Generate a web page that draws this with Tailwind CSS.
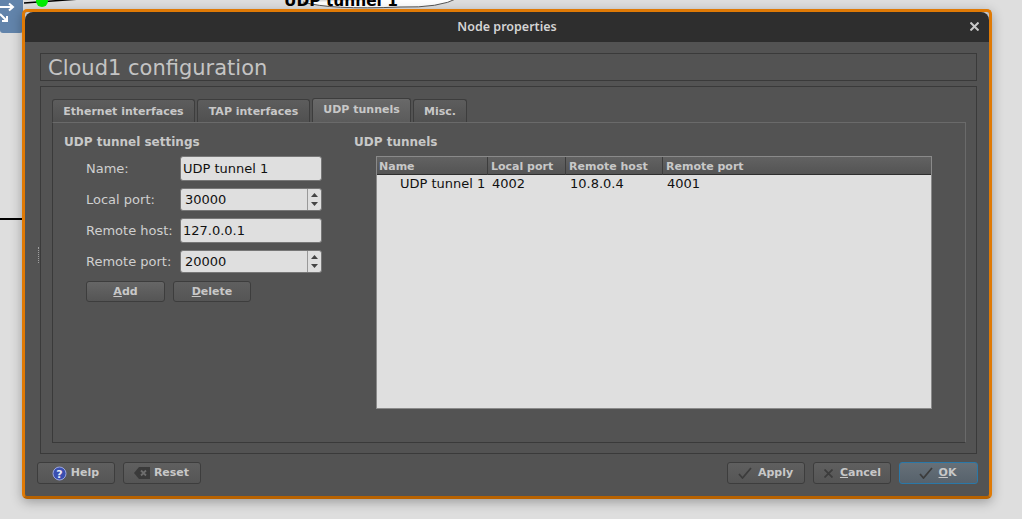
<!DOCTYPE html>
<html lang="en">
  <head>
    <meta charset="UTF-8" />
    <title>Node properties</title>
    <script src="https://cdn.jsdelivr.net/npm/@tailwindcss/browser@4"></script>
  </head>
  <body class="relative w-[1022px] h-[519px] overflow-hidden bg-[#dedede] font-['DejaVu_Sans',sans-serif] text-[13px] text-[#cfcfcf]">
    <!-- Canvas behind the dialog -->
    <div class="absolute left-0 top-[-8px] w-[23px] h-[41px] rounded-b-[3px] bg-[#6284ab]">
      <svg class="absolute left-0 top-[8px]" width="16" height="26" viewBox="0 0 16 26" fill="none" stroke="#fff" stroke-width="2">
        <path d="M0 7h12M9 3.500l4 3.500-4 3.500" />
        <path d="M0 14l7 7M2 21h5v-5" />
      </svg>
    </div>
    <svg class="absolute left-0 top-0" width="480" height="10" viewBox="0 0 480 10" fill="none">
      <path d="M24 3L80 -1" stroke="#000" stroke-width="1.500" />
      <circle cx="42" cy="1" r="6" fill="#00f000" />
      <path d="M303 2Q330 10 400 7Q440 8 458 -2" stroke="#555" stroke-width="1" fill="#fff" />
    </svg>
    <span class="absolute left-[284px] top-[-8px] font-bold text-[15.400px] leading-[18px] text-black">UDP tunnel 1</span>
    <div class="absolute left-0 top-[218px] w-[24px] h-[2px] bg-black"></div>

    <!-- Dialog -->
    <div class="absolute left-[22px] top-[9px] w-[970px] h-[490px] rounded-[5px] border-[3px] border-[#e07a05] border-b-[#b86200] bg-[#535353] shadow-[0_3px_12px_rgba(0,0,0,0.3)] flex flex-col">
      <div class="h-[30px] shrink-0 rounded-t-[2px] bg-[#c4c4c4]">
        <div class="relative h-full rounded-t-[8px] bg-[#2e2e2e] flex items-center justify-center font-['Noto_Sans',sans-serif] font-semibold text-[12.500px] text-[#d4d4d4]">
          Node properties
          <svg class="absolute right-[10px] top-[10px]" width="9" height="9" viewBox="0 0 9 9" stroke="#c8c8c8" stroke-width="2"><path d="M.5.500l8 8M8.500.500l-8 8" /></svg>
        </div>
      </div>

      <div class="relative flex-1 flex flex-col pt-[11px] px-[15px]">
        <!-- Splitter grip -->
        <div class="absolute left-[13px] top-[205px] w-[2px] h-[16px] border-l border-dotted border-[#a0a0a0]"></div>

        <div class="h-[28px] w-[937px] border border-[#3a3a3a] pl-[7px] pt-[4px] flex items-center text-[21px] text-[#c4c4c4]">Cloud1 configuration</div>

        <div class="mt-[5px] w-[937px] h-[368px] border border-[#3a3a3a] pt-[11px] pl-[11px] pr-[10px] pb-[10px] flex flex-col">
          <!-- Tabs -->
          <div class="flex items-end h-[24px] shrink-0 gap-[2px] text-[11px] font-bold text-[#c8c8c8]">
            <div class="w-[143px] h-[23px] pt-[2px] rounded-t-[3px] border border-b-0 border-[#3d3d3d] bg-gradient-to-b from-[#5d5d5d] to-[#505050] flex items-center justify-center">Ethernet interfaces</div>
            <div class="w-[113px] h-[23px] pt-[2px] rounded-t-[3px] border border-b-0 border-[#3d3d3d] bg-gradient-to-b from-[#5d5d5d] to-[#505050] flex items-center justify-center">TAP interfaces</div>
            <div class="w-[99px] h-[24px] rounded-t-[3px] border border-b-0 border-[#3d3d3d] bg-gradient-to-b from-[#696969] to-[#5b5b5b] flex items-center justify-center pb-[1px]">UDP tunnels</div>
            <div class="w-[54px] h-[23px] pt-[2px] rounded-t-[3px] border border-b-0 border-[#3d3d3d] bg-gradient-to-b from-[#5d5d5d] to-[#505050] flex items-center justify-center">Misc.</div>
          </div>

          <!-- Tab pane -->
          <div class="flex-1 border border-[#6a6a6a] border-l-[#3a3a3a] border-b-[#3a3a3a] flex">
            <!-- Settings form -->
            <div class="w-[301px] shrink-0 pl-[11px] pt-[12px]">
              <div class="h-[15px] leading-[15px] text-[12px] font-bold text-[#c8c8c8]">UDP tunnel settings</div>
              <div class="mt-[6px] ml-[22px] grid grid-cols-[94px_142px] items-center gap-y-[7px]">
                <label>Name:</label>
                <div class="h-[25px] rounded-[3px] border border-[#777] bg-[#dfdfdf] pl-[2px] flex items-center text-[#111]">UDP tunnel 1</div>
                <label>Local port:</label>
                <div class="h-[23px] rounded-[3px] border border-[#777] bg-[#dfdfdf] flex items-center text-[#111]">
                  <span class="flex-1 pl-[4px]">30000</span>
                  <svg class="w-[14px] h-[21px] border-l border-[#999]" viewBox="0 0 13 21" fill="#444"><path d="M6.500 4L10 8H3zM6.500 17L3 13h7z" /></svg>
                </div>
                <label>Remote host:</label>
                <div class="h-[25px] rounded-[3px] border border-[#777] bg-[#dfdfdf] pl-[2px] flex items-center text-[#111]">127.0.0.1</div>
                <label>Remote port:</label>
                <div class="h-[23px] rounded-[3px] border border-[#777] bg-[#dfdfdf] flex items-center text-[#111]">
                  <span class="flex-1 pl-[4px]">20000</span>
                  <svg class="w-[14px] h-[21px] border-l border-[#999]" viewBox="0 0 13 21" fill="#444"><path d="M6.500 4L10 8H3zM6.500 17L3 13h7z" /></svg>
                </div>
              </div>
              <div class="mt-[8px] ml-[22px] flex gap-[8px] text-[11px] font-bold text-[#c8c8c8]">
                <button class="w-[79px] h-[21px] pt-[2px] rounded-[3px] border border-[#3d3d3d] bg-gradient-to-b from-[#666] to-[#555] font-bold"><u>A</u>dd</button>
                <button class="w-[78px] h-[21px] pt-[2px] rounded-[3px] border border-[#3d3d3d] bg-gradient-to-b from-[#5f5f5f] to-[#555] font-bold"><u>D</u>elete</button>
              </div>
            </div>

            <!-- Tunnels table -->
            <div class="flex-1 pt-[12px]">
              <div class="h-[15px] leading-[15px] text-[12px] font-bold text-[#c8c8c8]">UDP tunnels</div>
              <div class="mt-[6px] ml-[22px] w-[556px] h-[253px] border border-[#8a8a8a] bg-[#dfdfdf] flex flex-col">
                <div class="h-[18px] shrink-0 grid grid-cols-[111px_78px_97px_1fr] border-b border-[#2e2e2e] bg-gradient-to-b from-[#626262] to-[#545454] text-[11px] font-bold text-[#c8c8c8]">
                  <div class="pl-[2px] pt-[1px] leading-[17px] border-r border-[#3d3d3d]">Name</div>
                  <div class="pl-[3px] pt-[1px] leading-[17px] border-r border-[#3d3d3d]">Local port</div>
                  <div class="pl-[3px] pt-[1px] leading-[17px] border-r border-[#3d3d3d]">Remote host</div>
                  <div class="pl-[3px] pt-[1px] leading-[17px]">Remote port</div>
                </div>
                <div class="grid grid-cols-[111px_78px_97px_1fr] text-[#111] leading-[17px]">
                  <div class="pl-[23px] whitespace-nowrap">UDP tunnel 1</div>
                  <div class="pl-[4px]">4002</div>
                  <div class="pl-[4px]">10.8.0.4</div>
                  <div class="pl-[4px]">4001</div>
                </div>
              </div>
            </div>
          </div>
        </div>

        <!-- Dialog buttons -->
        <div class="mt-[8px] w-[941px] flex gap-[8px] text-[11px] font-bold text-[#c8c8c8] -ml-[3px]">
          <button class="w-[78px] h-[22px] rounded-[3px] border border-[#3d3d3d] bg-gradient-to-b from-[#5f5f5f] to-[#555] font-bold flex items-center justify-center gap-[4px] pr-[1px]">
            <svg width="15" height="15" viewBox="0 0 15 15"><circle cx="7.500" cy="7.500" r="6.500" fill="#3a4fb0" stroke="#9aa6e0" /><text x="7.500" y="11.500" text-anchor="middle" font-size="11" font-weight="700" fill="#e8e8f8">?</text></svg>
            Help
          </button>
          <button class="w-[78px] h-[22px] rounded-[3px] border border-[#3d3d3d] bg-gradient-to-b from-[#5f5f5f] to-[#555] font-bold flex items-center justify-center gap-[4px] pr-[1px]">
            <svg width="16" height="12" viewBox="0 0 16 12"><path d="M5 0h11v12H5L0 6z" fill="#3a3a3a" /><path d="M7 3.500l5 5M12 3.500l-5 5" stroke="#6e6e6e" stroke-width="1.800" /></svg>
            Reset
          </button>
          <div class="flex-1"></div>
          <button class="w-[78px] h-[22px] rounded-[3px] border border-[#3d3d3d] bg-gradient-to-b from-[#5f5f5f] to-[#555] font-bold flex items-center justify-center gap-[6px] pr-[1px]">
            <svg width="14" height="12" viewBox="0 0 14 12" fill="none" stroke="#3c3c3c" stroke-width="1.800"><path d="M1 7l3.500 4L13 1" /></svg>
            Apply
          </button>
          <button class="w-[78px] h-[22px] rounded-[3px] border border-[#3d3d3d] bg-gradient-to-b from-[#5f5f5f] to-[#555] font-bold flex items-center justify-center gap-[7px] pl-[1px]">
            <svg width="9" height="9" viewBox="0 0 9 9" fill="none" stroke="#3c3c3c" stroke-width="1.800"><path d="M.5.500l8 8M8.500.500l-8 8" /></svg>
            <span><u>C</u>ancel</span>
          </button>
          <button class="w-[79px] h-[22px] rounded-[3px] border border-[#2a78a8] bg-gradient-to-b from-[#667078] to-[#57626c] font-bold flex items-center justify-center gap-[6px] pr-[2px]">
            <svg width="14" height="12" viewBox="0 0 14 12" fill="none" stroke="#3c3c3c" stroke-width="1.800"><path d="M1 7l3.500 4L13 1" /></svg>
            <span><u>O</u>K</span>
          </button>
        </div>
      </div>
    </div>
  </body>
</html>
